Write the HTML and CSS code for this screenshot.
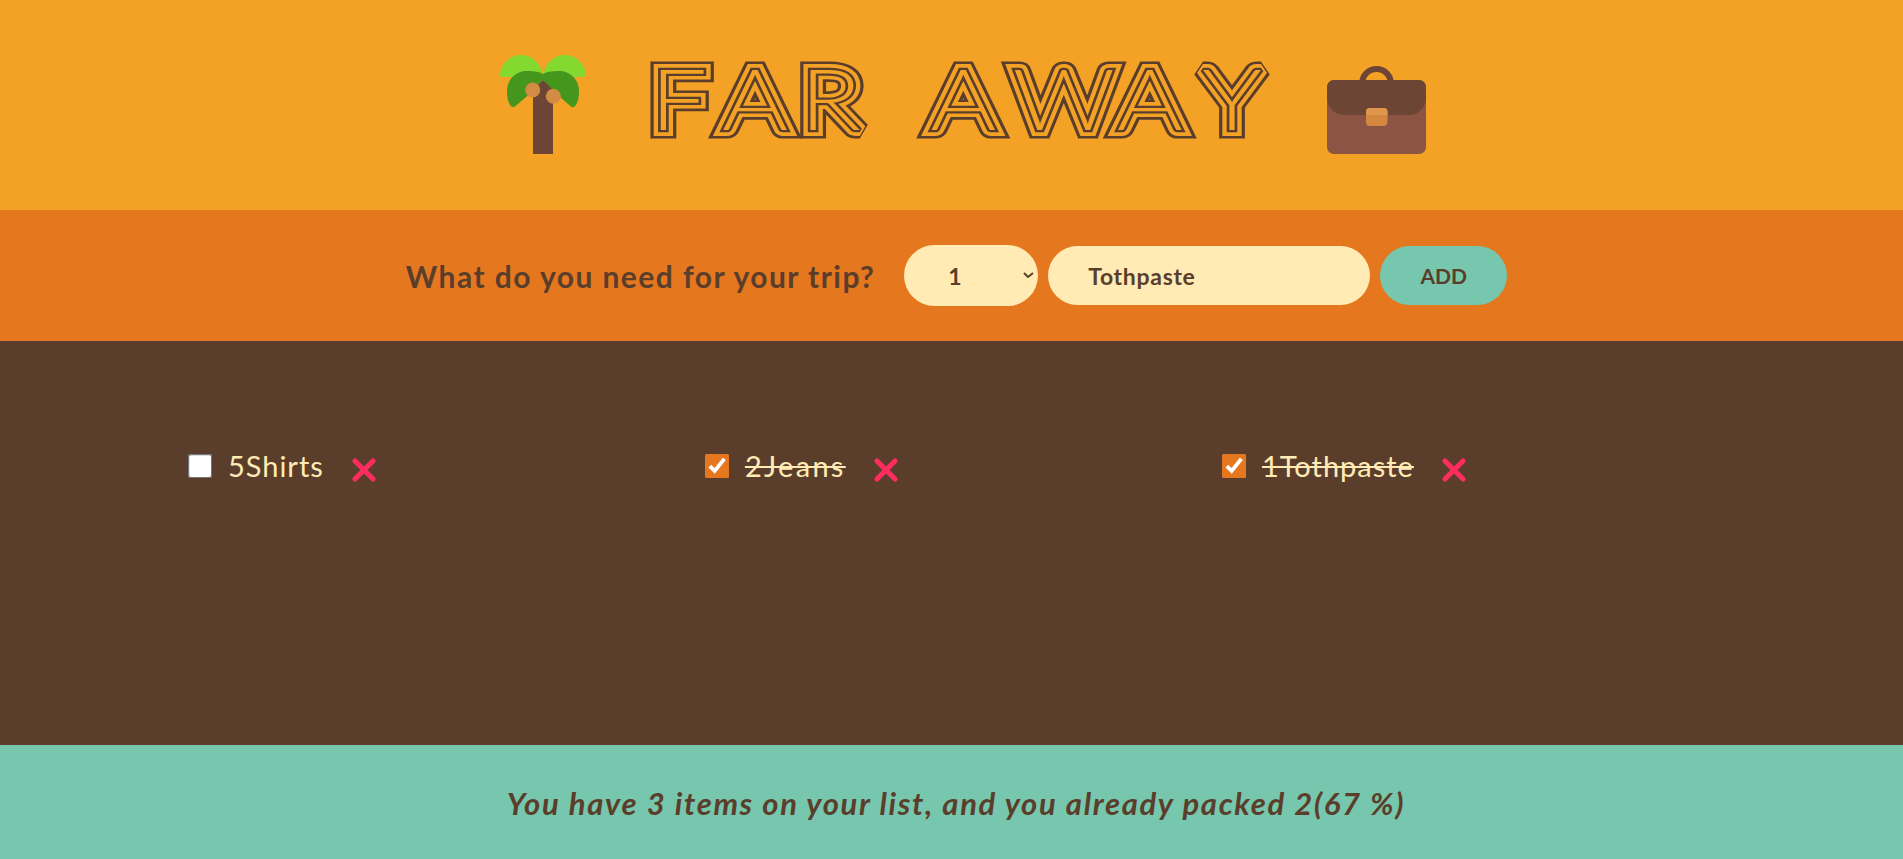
FILE: index.html
```html
<!DOCTYPE html>
<html lang="en">
<head>
  <meta charset="UTF-8">
  <meta name="viewport" content="width=device-width, initial-scale=1.0">
  <title>Far Away</title>
  <link rel="stylesheet" href="styles.css">
</head>
<body>

<div class="app">
  <header class="logo">
    <svg class="palm" viewBox="0 0 86 99" width="86" height="99">
      <path class="leaf-light" d="M43 21C41 8 32 0 21 0C10 0 2 9 0 18C-.5 20.500 1 22 3 22Z"/>
      <path class="leaf-light" d="M43 21C45 8 54 0 65 0C76 0 84 9 86 18C86.500 20.500 85 22 83 22Z"/>
      <path class="leaf-dark" d="M43 19C38 16 32 16 25 16C14 17 7 26 7 36C7 42 8 48 11 51C12 52.500 14 52.500 15 51.500L33 36L43 25Z"/>
      <path class="leaf-dark" d="M43 19C48 16 54 16 61 16C72 17 79 26 79 36C79 42 78 48 75 51C74 52.500 72 52.500 71 51.500L53 36L43 25Z"/>
      <path class="trunk" d="M33 35L43 25L53 35V99H33Z"/>
      <circle class="coconut" cx="32.700" cy="35" r="7.500"/>
      <circle class="coconut" cx="53.300" cy="41.300" r="7.500"/>
    </svg>

    <svg class="title" viewBox="0 0 620 81" width="620" height="81" role="img" aria-label="FAR AWAY">
      <g transform="scale(1.2 1)">
        <use href="#farAway" class="line-1"/>
        <use href="#farAway" class="line-2"/>
        <use href="#farAway" class="line-3"/>
        <g class="line-4">
          <text id="farAway" y="70.500" x=".3 60 125 190 233.500 302 389 460">FAR AWAY</text>
        </g>
      </g>
    </svg>

    <svg class="case" viewBox="0 0 99 88" width="99" height="88">
      <path class="case-handle" d="M35.200 18V17.300A14.300 14.300 0 0 1 63.800 17.300V18" />
      <rect class="case-body" x="0" y="14" width="99" height="74" rx="7"/>
      <path class="case-flap" d="M7 14H92A7 7 0 0 1 99 21V32A17 17 0 0 1 82 49H17A17 17 0 0 1 0 32V21A7 7 0 0 1 7 14Z"/>
      <rect class="case-clasp" x="39" y="42" width="21.500" height="18" rx="4"/>
      <path class="case-clasp-top" d="M43 42H56.500A4 4 0 0 1 60.500 46V49H39V46A4 4 0 0 1 43 42Z"/>
    </svg>
  </header>

  <form class="add-form">
    <h3>What do you need for your trip?</h3>
    <select class="qty">
      <option>1</option>
      <option>2</option>
      <option>3</option>
    </select>
    <input class="desc" type="text" value="Tothpaste">
    <button class="add" type="button">Add</button>
  </form>

  <div class="list">
    <ul>
      <li>
        <input type="checkbox">
        <span>5Shirts</span>
        <button class="del" type="button"><svg viewBox="0 0 24 24" width="24" height="24"><path d="M3 3L21 21M21 3L3 21"/></svg></button>
      </li>
      <li>
        <input type="checkbox" checked>
        <span class="packed jeans">2Jeans</span>
        <button class="del" type="button"><svg viewBox="0 0 24 24" width="24" height="24"><path d="M3 3L21 21M21 3L3 21"/></svg></button>
      </li>
      <li>
        <input type="checkbox" checked>
        <span class="packed">1Tothpaste</span>
        <button class="del" type="button"><svg viewBox="0 0 24 24" width="24" height="24"><path d="M3 3L21 21M21 3L3 21"/></svg></button>
      </li>
    </ul>
  </div>

  <footer class="stats">
    <em>You have 3 items on your list, and you already packed 2(67 %)</em>
  </footer>
</div>

</body>
</html>
```

FILE: styles.css
```css
* {
  margin: 0;
  padding: 0;
  box-sizing: border-box;
}

body {
  font-family: "Lato", "Open Sans", sans-serif;
  font-size: 29px;
  color: #5a3e2b;
  overflow: hidden;
}

.app {
  width: 100%;
  height: 100vh;
  display: grid;
  grid-template-rows: 210px 131px 1fr 114px;
}

/* header */
.logo {
  background: #f4a226;
  display: flex;
  align-items: flex-end;
  justify-content: center;
  padding: 0 0 56px 22px;
}

.palm { margin-right: 64px; }
.case { margin-left: 57px; }

.leaf-light { fill: #83d92f; }
.leaf-dark { fill: #45961c; }
.trunk { fill: #6d4534; }
.coconut { fill: #d28c45; }

.title {
  margin-bottom: 14px;
  overflow: visible;
}

.title text {
  font-family: "Lato", sans-serif;
  font-size: 84px;
  font-weight: 300;
  stroke-linejoin: miter;
  stroke-miterlimit: 2;
  vector-effect: non-scaling-stroke;
}

.line-1 { fill: #5a3e2b; stroke: #5a3e2b; stroke-width: 19px; }
.line-2 { fill: #f4a226; stroke: #f4a226; stroke-width: 13px; }
.line-3 { fill: #5a3e2b; stroke: #5a3e2b; stroke-width: 5px; }
.line-4 { fill: #f4a226; stroke: none; }

.case-handle {
  fill: none;
  stroke: #6d4534;
  stroke-width: 6px;
}

.case-body { fill: #8c5543; }
.case-flap { fill: #6d4534; }
.case-clasp { fill: #d4873f; }
.case-clasp-top { fill: #e0964a; }

/* form */
.add-form {
  background: #e5771f;
  display: flex;
  align-items: center;
  justify-content: center;
  gap: 10px;
  padding-left: 10px;
}

.add-form h3 {
  font-size: 30px;
  font-weight: 700;
  letter-spacing: 1.450px;
  margin-right: 19px;
}

.desc, .add {
  font-family: inherit;
  font-size: 23px;
  font-weight: 700;
  letter-spacing: .7px;
  color: #5a3e2b;
  border: none;
  border-radius: 100px;
  padding: 0 40px;
  height: 59px;
}

/* the reference runs at 121% page zoom, the native arrow only scales this way */
.qty {
  zoom: 1.21;
  width: 110.700px;
  height: 50.400px;
  padding: 0 33px;
  font-family: inherit;
  font-size: 19px;
  font-weight: 700;
  letter-spacing: .6px;
  color: #5a3e2b;
  background: #ffebb3;
  border: none;
  border-radius: 100px;
}

.desc {
  width: 322px;
  background: #ffebb3;
}

.add {
  width: 127px;
  padding: 0;
  background: #76c7ad;
  text-transform: uppercase;
  font-size: 21px;
  letter-spacing: 0;
}

/* list */
.list {
  background: #5a3e2b;
  color: #ffebb3;
  padding: 107px 0 0 188px;
}

.list ul {
  list-style: none;
  display: grid;
  grid-template-columns: repeat(3, 517px);
}

.list li {
  display: flex;
  align-items: center;
  gap: 14.500px;
}

.list li span { letter-spacing: 1px; }
.list li .jeans { letter-spacing: 2.300px; }

.list input[type="checkbox"] {
  zoom: 1.21;
  width: 21px;
  height: 21px;
  margin-top: 2px;
  accent-color: #e5771f;
}

.packed {
  text-decoration: line-through;
  text-decoration-thickness: 2px;
}

.del {
  background: none;
  border: none;
  padding: 0;
  margin-left: 13.500px;
  display: flex;
  transform: translateY(4px);
}

.del path {
  fill: none;
  stroke: #ff2d5f;
  stroke-width: 5px;
  stroke-linecap: round;
}

/* footer */
.stats {
  background: #76c7ad;
  display: flex;
  align-items: center;
  justify-content: center;
  padding: 2px 0 0 9px;
  font-size: 31px;
  font-weight: 700;
  letter-spacing: 1.650px;
}
```
